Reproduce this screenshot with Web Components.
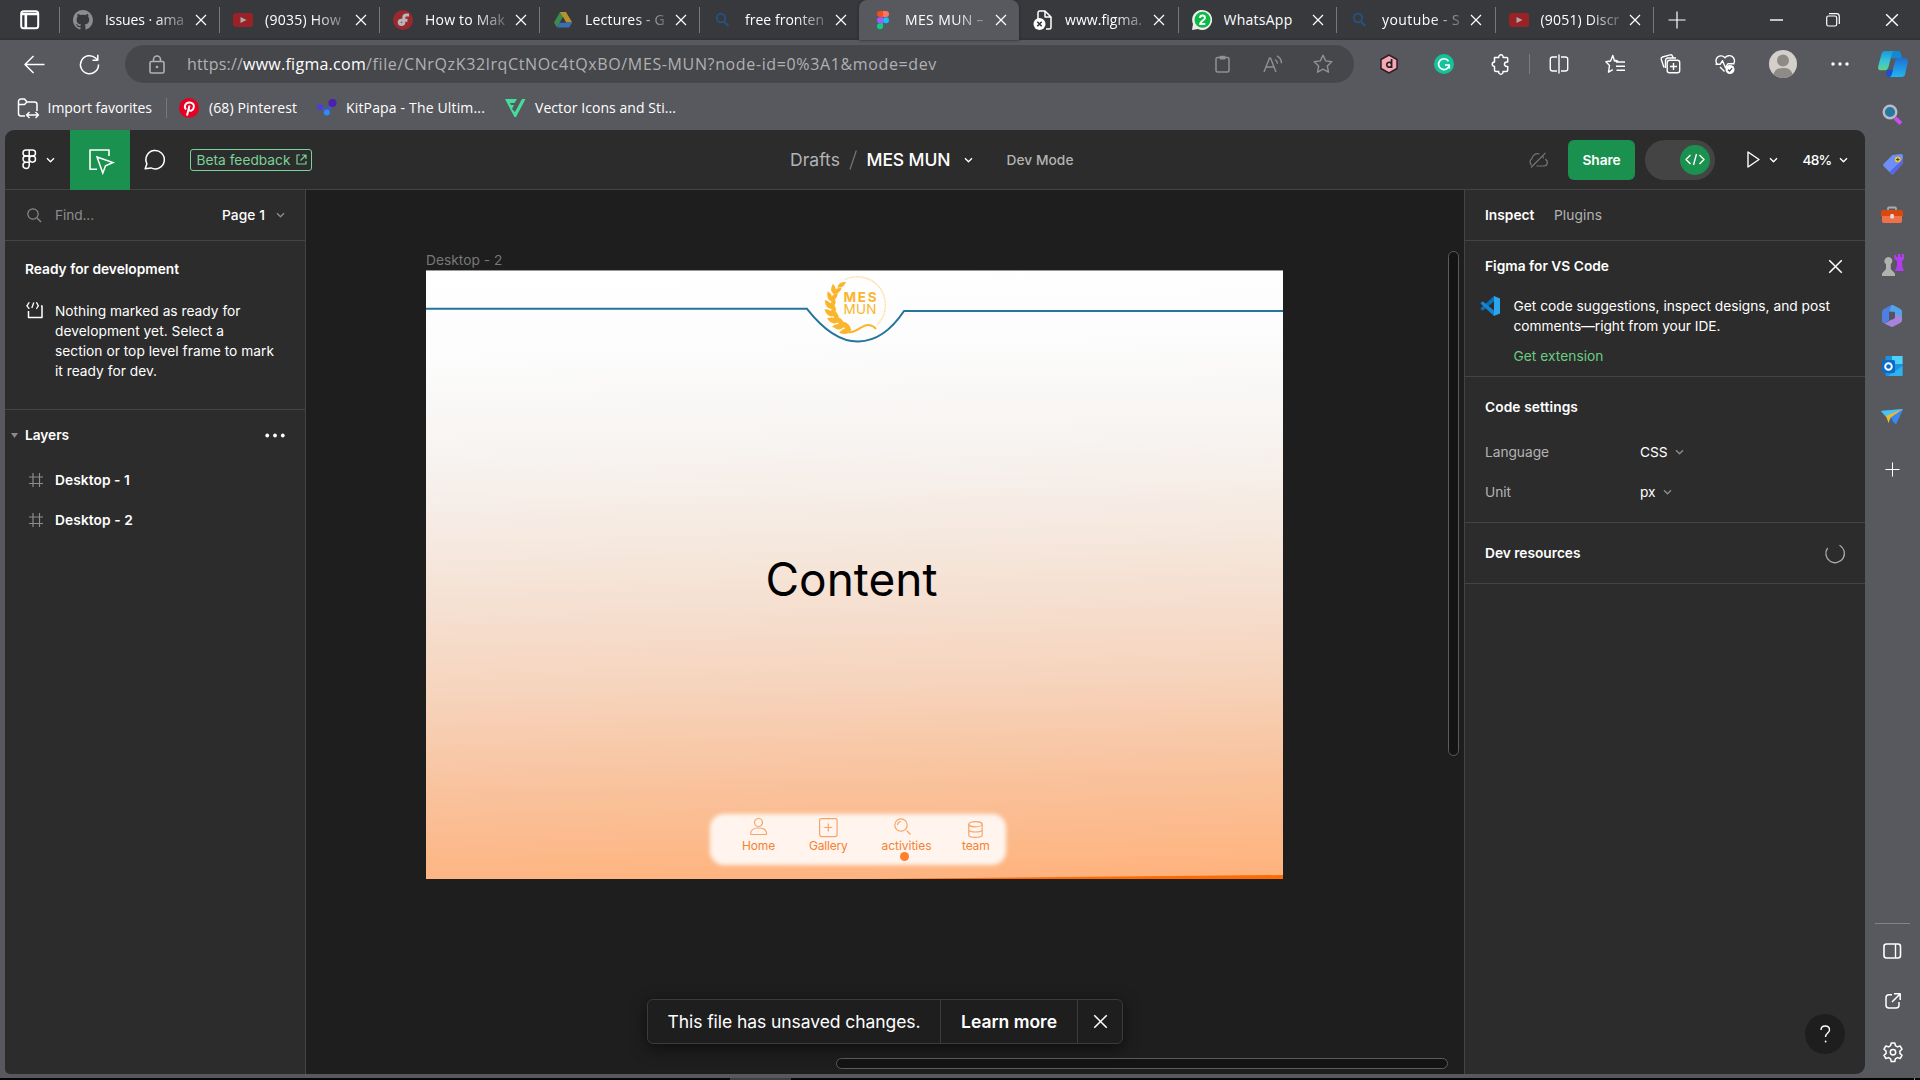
<!DOCTYPE html>
<html lang="en">
<head>
<meta charset="utf-8">
<title>MES MUN – Figma</title>
<style>
html,body{margin:0;padding:0;background:#58595e;overflow:hidden}
body{width:1920px;height:1080px}
</style>
</head>
<body>
<browser-window></browser-window>
<script>
const ICONS = {
 tabs:`<rect x="1.2" y="1.2" width="17" height="17" rx="2.5" stroke-width="2"/><path d="M1 4h18M5.8 4v14" stroke-width="2.6"/>`,
 close:`<path d="M1 1l10 10M11 1L1 11"/>`,
 github:`<path fill="#8b8d90" stroke="none" d="M10 0a10 10 0 0 0-3.2 19.5c.5.1.7-.2.7-.5v-1.900c-2.800.6-3.400-1.200-3.400-1.200-.4-1.100-1.100-1.400-1.100-1.400-.9-.6.1-.6.1-.6 1 .1 1.500 1 1.500 1 .9 1.500 2.400 1.100 2.900.8.1-.6.4-1.100.6-1.300-2.200-.3-4.500-1.100-4.500-5 0-1.100.4-2 1-2.700-.1-.2-.4-1.200.1-2.600 0 0 .8-.3 2.700 1a9.400 9.400 0 0 1 5 0c1.900-1.300 2.700-1 2.700-1 .5 1.400.2 2.400.1 2.600.6.7 1 1.600 1 2.700 0 3.900-2.300 4.700-4.500 5 .4.3.7.9.7 1.900V19c0 .3.2.6.7.5A10 10 0 0 0 10 0z"/>`,
 youtube:`<rect y="3" width="20" height="14" rx="3" fill="#9a2227" stroke="none"/><path d="M7.500 7l6 3-6 3z" fill="#aaa" stroke="none"/>`,
 jred:`<circle cx="10" cy="10" r="10" fill="#99282f" stroke="none"/><path d="M16 5h-2.500c-2 0-2.700 1-2.700 2.500v4.700c0 1.500-.8 2.300-2.300 2.300s-2.300-.8-2.300-2.200.8-2.100 2.300-2.100h6" stroke="#b7b7b9" stroke-width="3"/>`,
 drive:`<path d="M7 2h6L7.500 11.500 4 17.500 1 12.500z" fill="#3c8a4c" stroke="none"/><path d="M7 2h6l6.200 10.500h-6z" fill="#b8922c" stroke="none"/><path d="M4 17.500l3-5h12.200l-3 5z" fill="#396fb4" stroke="none"/><path d="M10 7.200l-3 5.300h6z" fill="#3a3b3f" stroke="none"/>`,
 bing:`<circle cx="8" cy="8" r="4.200" stroke="#27517d" stroke-width="2"/><path d="M11 11.500l4.500 4.500" stroke="#27517d" stroke-width="2.200"/>`,
 figma:`<g stroke="none"><path d="M7 1h3v6H7a3 3 0 0 1 0-6z" fill="#f24e1e"/><path d="M10 1h3a3 3 0 0 1 0 6h-3z" fill="#ff7262"/><path d="M10 7.200v6H7a3 3 0 0 1 0-6z" fill="#a259ff"/><circle cx="13" cy="10.200" r="3" fill="#1abcfe"/><path d="M7 13.300h3v3a3 3 0 1 1-3-3z" fill="#0acf83"/></g>`,
 filex:`<path d="M5 9V2.500A1.700 1.700 0 0 1 6.700 1H12l6 6v10.500a1.500 1.500 0 0 1-1.500 1.500H13M12 1v6h6" stroke-width="1.500"/><circle cx="6.500" cy="14" r="6" fill="#fff" stroke="none"/><path d="M4.300 11.800l4.400 4.400M8.700 11.800l-4.400 4.400" stroke="#333" stroke-width="1.600"/>`,
 whatsapp:`<path d="M0 20l1-6a10 10 0 1 1 5 5z" fill="#eee" stroke="none"/><circle cx="10.500" cy="9.800" r="8" fill="#0cba45" stroke="none"/><path d="M8 8c0-3.300 5-3.300 5 0 0 2-5 3.800-5 6h5.300" stroke="#fff" stroke-width="1.900"/>`,
 plus:`<path d="M9 .5v17M.5 9h17"/>`,
 min:`<path d="M0 1h13" stroke-width="1.400"/>`,
 restore:`<rect x=".7" y="3" width="10" height="10" rx="1.800"/><path d="M3 .7h7.500a2.800 2.800 0 0 1 2.800 2.800V11"/>`,
 back:`<path d="M9.500 1L1 9.500l8.500 8.500M1 9.500h19.500" stroke-width="1.500"/>`,
 reload:`<path d="M19.500 10.500A9 9 0 1 1 16.500 4l2 1.800M18.800 .8v5.400h-5.300" stroke-width="1.500"/>`,
 lock:`<rect x="1" y="6.500" width="14" height="11.500" rx="1.500" stroke-width="1.600"/><path d="M4.500 6.500V4.500a3.500 3.500 0 0 1 7 0v2" stroke-width="1.600"/><circle cx="8" cy="12" r="1.300" fill="currentColor" stroke="none"/>`,
 clip:`<rect x="1" y="2.500" width="13" height="14.500" rx="1.500" stroke-width="1.500"/><rect x="4.500" y=".8" width="6" height="3.600" rx="1" fill="currentColor" stroke="none"/>`,
 aloud:`<path d="M1 17L6.500 3h1L13 17M3 12h8M12 4.500a5 5 0 0 1 2.500 4.200M14 .8a8.500 8.500 0 0 1 4.500 7.400" stroke-width="1.400"/>`,
 star:`<path d="M10 1.200l2.700 5.700 6.100.8-4.500 4.300 1.200 6.200L10 15.200l-5.500 3 1.200-6.200L1.200 7.700l6.100-.8z" stroke-width="1.400"/>`,
 daily:`<path d="M9 1l8 4.500v9L9 19l-8-4.500v-9z" fill="#f9a7b5" stroke="#2b2224" stroke-width="1.500"/><path d="M11.600 5v9M11.600 11.500a2.500 2.500 0 1 1 0-1.500" stroke="#222" stroke-width="1.700"/>`,
 gram:`<circle cx="10" cy="10" r="10" fill="#15c39a" stroke="none"/><path d="M14.500 7.200A5.400 5.400 0 1 0 15.300 11H11M15.300 11v3.500" stroke="#fff" stroke-width="1.700"/>`,
 puzzle:`<path d="M4.500 3.500h4.300a2.200 2.200 0 1 1 4.300 0h3.600a1 1 0 0 1 1 1V8h-1a2.200 2.200 0 0 0 0 4.500h1V16a1.500 1.500 0 0 1-1.500 1.500H13a2.200 2.200 0 1 1-4.300 0H6A1.500 1.500 0 0 1 4.500 16v-3.500a2.200 2.200 0 1 1 0-4.500z" stroke-width="1.500"/>`,
 split:`<path d="M8 3H3.500A2.200 2.200 0 0 0 1.300 5v10a2.200 2.200 0 0 0 2.200 2H8M12 3h4.500a2.200 2.200 0 0 1 2.200 2v10a2.200 2.200 0 0 1-2.200 2H12M10 .5v19" stroke-width="1.400"/>`,
 favs:`<path d="M13.200 7L9.500 7 7.800 1.500 5.600 7 .9 7.700l3.600 3.800-1 6.700 4.300-2.500M12 6.800l-2.800-.6M11 8h9M11 12.200h9M11.500 16.300H20" stroke-width="1.400"/>`,
 collect:`<path d="M4 13.500L1.200 5.300A2 2 0 0 1 2.500 3L10 .9a2 2 0 0 1 2.500 1.300l.5 1.600M5.500 14V6.500a2.500 2.500 0 0 1 2.500-2.500h8" stroke-width="1.400"/><rect x="7.200" y="6.200" width="12.500" height="12.500" rx="2.200" stroke-width="1.400"/><path d="M13.500 9v7M10 12.500h7" stroke-width="1.400"/>`,
 heart:`<path d="M2 10A5 5 0 0 1 10 3.800 5 5 0 0 1 18.500 10M9.500 17.500L5 13M.5 10.200h4.800l2.200-3.500 3 7 2.500-4h6.500" stroke-width="1.400"/><circle cx="15" cy="15.500" r="4.500" fill="#fff" stroke="none"/><path d="M13 15.800l1.500 1.300 2.600-3" stroke="#444" stroke-width="1.300"/>`,
 profile:`<circle cx="14" cy="14" r="14" fill="#d3d0cc" stroke="none"/><circle cx="14" cy="10.500" r="6" fill="#8e8a86" stroke="none"/><path d="M4.500 24.200C6 19 9 18 14 18s8 1 9.500 6.200A14 14 0 0 1 4.500 24.200z" fill="#8e8a86" stroke="none"/>`,
 dots:`<g fill="currentColor" stroke="none"><circle cx="2" cy="2" r="1.700"/><circle cx="9" cy="2" r="1.700"/><circle cx="16" cy="2" r="1.700"/></g>`,
 copilot:`<defs><linearGradient id="a" x1="0" y1="0" x2="0" y2="1"><stop offset="0" stop-color="#159bd7"/><stop offset=".5" stop-color="#35c2dc"/><stop offset="1" stop-color="#5ed58f"/></linearGradient><linearGradient id="b" x1="0" y1="0" x2="0" y2="1"><stop offset="0" stop-color="#1f6fd4"/><stop offset="1" stop-color="#22b5f2"/></linearGradient></defs><g stroke="none"><path d="M7 0h13c2 0 2.800 1 3.200 3L24 7h-5l-5 .500z" fill="#1488d0"/><path d="M18 7h9c2.500 0 3.200 1.700 2.800 4l-2.600 12c-.5 2-1.600 3-3.700 3H10c2.500 0 3.300-2 3.800-4z" fill="url(#b)"/><path d="M9 19h6l-1.500 5c-.4 1.500-1.500 2-3 2-1 0-2-1-2.500-3z" fill="#1a4fd6"/><path d="M7 0h10c-2 0-2.800 1.500-3.200 3L10.500 16c-.5 2-1.500 3.200-3.500 3.200H2.500C.5 19.200-.3 17.500.2 15.500L3.500 3C4 1 5 0 7 0z" fill="url(#a)"/></g>`,
 impfav:`<path d="M8 19H4a2.500 2.500 0 0 1-2.500-2.500v-12A2.500 2.500 0 0 1 4 2h3.500l2.500 3h7.500A2.500 2.500 0 0 1 20 7.500V14M1.500 7.500h6L10 5" stroke-width="1.500"/><path d="M10 18h11M12.500 15l-3 3 3 3M18.500 15l3 3-3 3" stroke-width="1.400"/>`,
 pin:`<circle cx="10" cy="10" r="10" fill="#e60023" stroke="none"/><path d="M7 11.500C4.500 8.500 6.500 4.500 10.300 4.500c3.500 0 5 2.300 4.500 4.800-.6 3.400-4 4.300-5 2.300M10.500 7.500L8 17.500" stroke="#fff" stroke-width="2"/>`,
 kit:`<path d="M3 8.500l7 5 6-8.500" stroke="#3b55dd" stroke-width="2.500"/><g stroke="none"><circle cx="3" cy="9" r="3" fill="#4a3fd6"/><circle cx="15.500" cy="5" r="4" fill="#4b1fb0"/><circle cx="9.800" cy="14.500" r="3" fill="#2b8df5"/></g>`,
 vec:`<path d="M0 1h12L9.500 5H5l1 2h3L7 11l3 3L17 1h3.500L11 19H9.500z" fill="#45dd9c" stroke="none"/>`,
 flogo:`<rect x="1" y="1" width="12.500" height="6" rx="3" stroke-width="1.500"/><path d="M7.200 1v15.500a3.100 3.100 0 1 1-3.100-3.300h3.100M7.200 7H4.100a3.100 3.100 0 0 0 0 6.200" stroke-width="1.500"/><circle cx="10.400" cy="10.100" r="3.100" stroke-width="1.500"/>`,
 chev:`<path d="M1 1.200l3.500 3.500L8 1.200" stroke-width="1.400"/>`,
 inspect:`<path d="M8 20.200H1V1h19v6" stroke-width="1.600"/><path d="M8 8l16 5.500-7.500 3.200L13.800 24z" stroke-width="1.500" stroke-linejoin="miter"/>`,
 comment:`<path d="M1.200 18.800l1.700-5A9.200 9.200 0 1 1 7 17.900l-5.800.9z" stroke-width="1.500"/>`,
 ext:`<path d="M4 1H1v9h9V7M6 1h4v4M10 1L4.500 6.500" stroke-width="1.200"/>`,
 slash:`<path d="M7.300.5L1 19.500" stroke-width="1.200"/>`,
 cloud:`<path d="M11.500 2A5.500 5.500 0 0 0 4 6.500 4 4 0 0 0 3.500 13M8.500 14H16a3.500 3.500 0 0 0 1.200-6.700M15.300 6.300A6 6 0 0 0 15 4.500M17.500.8L3 15.500" stroke-width="1.200"/>`,
 code:`<path d="M5.500 1L1 5.500 5.500 10M14.500 1L19 5.500 14.500 10M11.500 0l-3 11" stroke-width="1.400"/>`,
 play:`<path d="M1 1l11 7.500L1 16z" stroke-width="1.400"/>`,
 search:`<circle cx="6" cy="6" r="5.200"/><path d="M10 10l4 4"/>`,
 ready:`<path d="M2.500 9v6.500H16V4h-1" stroke-width="1.500"/><path d="M3.500.7C1.500 1 2.500 3 .8 3.800 2.500 4.500 1.500 6.300 3.500 6.500M7.800.5l-2 5.500M10 .7c2 .3 1 2.300 2.500 3.100-1.500.7-.5 2.500-2.500 2.700" stroke-width="1.300"/>`,
 tri:`<path d="M0 0h7L3.500 5z" fill="#8a8a8a" stroke="none"/>`,
 hash:`<path d="M4 0v14M10.500 0v14M0 4h14M0 10.500h14" stroke-width="1.200"/>`,
 vscode:`<path d="M14 0v5.500L3 14.500.8 13.600v-1.500z" fill="#0a6fb5" stroke="none"/><path d="M14 20v-5.500L3 5.400l-2.200 1v1.400z" fill="#1684d0" stroke="none"/><path d="M14 0l6 2.500v15L14 20z" fill="#2aa5ee" stroke="none"/>`,
 spinner:`<path d="M14.500 2.200A9.300 9.300 0 1 1 2.600 5" stroke-width="1.300"/>`,
 ssearch:`<path d="M13 14l6 5.500" stroke="#c84ef0" stroke-width="4"/><circle cx="8" cy="8" r="6.300" fill="#2876a4" stroke="#b9bcc2" stroke-width="2.400"/>`,
 tag:`<path d="M10.500 1L19 0q2 0 2 2l-.500 7.500L11.500 20q-1 1-2 0l-8-8q-1-1 0-2z" fill="#6f8ff8" stroke="none"/><path d="M21 5l-.500 4.500L11.500 20q-1 1-2 0l-2-2z" fill="#5865e8" stroke="none"/><circle cx="15.800" cy="5.500" r="3" fill="#f2c62c" stroke="none"/><path d="M15.800 3.800v3.400M14.100 5.500h3.400" stroke="#444" stroke-width="1"/>`,
 tools:`<path d="M7 5V2.500q0-1 1-1h6q1 0 1 1V5" stroke="#a9abae" stroke-width="1.800"/><path d="M0 6q0-2 2-2h18q2 0 2 2v4H0z" fill="#d8480f" stroke="none"/><path d="M1 10h20v5q0 2-2 2H3q-2 0-2-2z" fill="#ef7049" stroke="none"/><rect x="9.300" y="8" width="3.600" height="4.500" rx="1" fill="#dcdcdc" stroke="none"/>`,
 chess:`<path d="M13 1h2v2h2V0h2.500v3h1.500V0H23v5l-2 2 .5 6L23 17h-9l2-5V7l-2.500-2z" fill="#b43cf0" stroke="none"/><path d="M7.500 3a4 4 0 0 1 2.300 7.200V15l4.200 4.500V22H1v-2.500L5 15v-4.800A4 4 0 0 1 7.500 3z" fill="#b1b1b0" stroke="none"/>`,
 m365:`<path d="M10.500 0L14.500 1.500 8 7v8l-4.500 3.500L1 17V7q0-2 2-3z" fill="#4f7fe0" stroke="none"/><path d="M10.500 0q1-.3 2 .2L19.500 4q1.500 1 1.500 2.500V14l-7-4V7L8.500 6.500z" fill="#52a4ea" stroke="none"/><path d="M21 12v3.500q0 1.500-1.500 2.300L12.500 21.500q-1.500.8-3 0L3.500 18.500 8 16l6-3.500V9z" fill="#a883dc" stroke="none"/><path d="M14 8.500l-3-1.800-3 1.800v4.500l3 1.700 3-1.700z" fill="#505269" stroke="none"/>`,
 outlook:`<rect x="3.500" y="0" width="17" height="20" rx="1" fill="#1b93e0" stroke="none"/><path d="M10 0h10.500v8H10z" fill="#4fd2f8" stroke="none"/><path d="M20.500 10v10H6z" fill="#2fb3ee" stroke="none"/><rect x="0" y="4" width="13" height="13" rx="1.500" fill="#0a6cc8" stroke="none"/><circle cx="6.500" cy="10.500" r="3.300" stroke="#fff" stroke-width="1.900"/>`,
 plane:`<path d="M0 2L22 0 15 15z" fill="#3f9ff2" stroke="none"/><path d="M0 2L22 0 5 8z" fill="#48c3f5" stroke="none"/><path d="M5 7L22 0 7.500 14z" fill="#f6b81c" stroke="none"/><path d="M9 9L22 0 15 15z" fill="#3a86f5" stroke="none"/><path d="M7.500 14l2-5 2.500 2z" fill="#2360b5" stroke="none"/>`,
 panel:`<rect x="1" y="1" width="16.500" height="14" rx="2.500" stroke-width="1.600"/><path d="M12.500 1v14" stroke-width="1.400"/>`,
 sext:`<path d="M7 1.800H4A3 3 0 0 0 1 4.800V12a3 3 0 0 0 3 3h7a3 3 0 0 0 3-3V9M9 .8h6.200V7M15 1L7 9" stroke-width="1.500"/>`,
 gear:`<path d="M8.200 1h3.600l.6 2.700 2 1.200 2.700-.9 1.900 3.200-2.100 1.900v2.300l2.100 1.900-1.900 3.200-2.700-.9-2 1.200-.6 2.700H8.200l-.6-2.700-2-1.200-2.700.9L1 13.300l2.100-1.900V9.100L1 7.200 2.900 4l2.700.9 2-1.200z" stroke-width="1.500"/><circle cx="10" cy="10.200" r="2.700" stroke-width="1.500"/>`,
 help:`<path d="M1 5C1 2.500 2.800 1 5.200 1s4.300 1.400 4.300 3.900c0 3-4 3.300-4 7" stroke-width="1.400"/><circle cx="5.600" cy="16.500" r=".9" fill="currentColor" stroke="none"/>`,
 home:`<circle cx="8.500" cy="4.500" r="4"/><path d="M.6 16c0-4 3-6 8-6s8 2 8 6q0 .5-.7.500H1.300Q.6 16.500.6 16z"/>`,
 gallery:`<rect x=".6" y=".6" width="17.500" height="18" rx="2"/><path d="M9.300 5.500v8M5.300 9.500h8"/>`,
 act:`<circle cx="7" cy="7" r="6.200"/><path d="M3.500 7A3.500 3.500 0 0 1 7 3.500M12.500 12.500l4 4"/>`,
 team:`<ellipse cx="7.500" cy="3.200" rx="6.700" ry="2.600"/><path d="M.8 3.200v10.500c0 3.500 13.400 3.500 13.400 0V3.200M.8 8.500c0 3.300 13.400 3.300 13.400 0"/>`
};
const RESET = `*{box-sizing:border-box}:host{box-sizing:border-box;display:flex}`;
function component(name, css, html) {
  customElements.define(name, class extends HTMLElement {
    constructor() {
      super();
      this.attachShadow({mode: 'open'}).innerHTML = `<style>${RESET}${css}</style>` + (typeof html === 'function' ? html(this) : html);
    }
  });
}
const icon = (n, w, h, extra = '') => `<ui-icon name="${n}" w="${w}" h="${h}" ${extra}></ui-icon>`;
const fit = (t, w, extra = '') => `<fit-text w="${w}" ${extra}>${t}</fit-text>`;

component('browser-window', `
:host{width:1920px;height:1080px;flex-direction:column;background:#58595e;color:#fff;font:14px/20px "Open Sans","Noto Sans",sans-serif;overflow:hidden}
.main{display:flex;height:944px}
.fav{height:45px}
.foot{height:2px;margin-top:4px;background:#060606;display:flex}
.foot i{margin-left:730px;width:61px;background:#3f3f40}
.foot b{margin-left:1123px;width:1px;background:#888}`,
`<tab-strip></tab-strip><address-row></address-row><favorites-row class="fav"></favorites-row>
<div class="main"><figma-app></figma-app><edge-sidebar></edge-sidebar></div><div class="foot"><i></i><b></b></div>`);

component('tab-strip', `
:host{height:40px;background:linear-gradient(#38393d 37px,#303135);align-items:center}
.tabs{width:59px;display:flex;padding-left:20px}
.add{margin-left:14px}.mn{margin-left:84px}.rs{margin-left:43px}.cl{margin-left:45px}`,
`<div class="tabs">${icon('tabs',20,20)}</div>
<browser-tab label="Issues · ama" icon="github" tw="79"></browser-tab>
<browser-tab label="(9035) How" icon="youtube" tw="76"></browser-tab>
<browser-tab label="How to Mak" icon="jred" tw="80"></browser-tab>
<browser-tab label="Lectures - G" icon="drive" tw="80"></browser-tab>
<browser-tab label="free fronten" icon="bing" tw="79"></browser-tab>
<browser-tab label="MES MUN –" icon="figma" tw="79" active></browser-tab>
<browser-tab label="www.figma." icon="filex" tw="77" nosep narrow></browser-tab>
<browser-tab label="WhatsApp" icon="whatsapp" tw="69" nofade narrow></browser-tab>
<browser-tab label="youtube - S" icon="bing" tw="78" narrow></browser-tab>
<browser-tab label="(9051) Discr" icon="youtube" tw="79" narrow end></browser-tab>
${icon('plus',18,18,'class="add"')}${icon('min',13,2,'class="mn"')}${icon('restore',14,14,'class="rs"')}${icon('close',14,14,'class="cl"')}`);

component('browser-tab', `
:host{width:160px;flex:none;height:40px;align-items:center;border-left:1px solid transparent;border-image:linear-gradient(transparent 8px,#77787b 8px,#77787b 32px,transparent 32px) 1}
:host([narrow]){width:158.500px}
:host([end]){border-right-width:1px;border-right-style:solid;width:159.500px}
:host([active]){background:#58595e;border-image:none;border:0;border-radius:8px 8px 0 0;box-shadow:0 0 3px #222326}
:host([nosep]){border-image:none}
ui-icon.f{margin-left:13px}
:host([active]) ui-icon.f{margin-left:14px}
.t{margin-left:12px;width:80px;overflow:hidden;-webkit-mask-image:linear-gradient(90deg,#000 62%,rgba(0,0,0,.25) 100%)}
:host([nofade]) .t{-webkit-mask-image:none}
:host([narrow]) .t{width:78.500px}
.x{margin-left:9.500px}`,
h=>`${icon(h.getAttribute('icon'),20,20,'class="f"')}<div class="t">${fit(h.getAttribute('label'),h.getAttribute('tw'))}</div>${icon('close',12,12,'class="x"')}`);

component('address-row', `
:host{height:45px;align-items:flex-start;padding-top:5px}
.c{display:flex;height:38px;align-items:center;justify-content:center;flex:none}
.bar{display:flex;width:1229px;flex:none;height:38px;border-radius:19px;background:#46474b;align-items:center;padding-left:24px;font-size:16px;color:#b0b1b3}
.bar b{font-weight:400;color:#fff}
.url{display:flex;flex:none;margin-left:22px;width:1001px}
.g{color:#909193}
.sep{width:1px;height:20px;background:#7b7c80;margin-top:9px}`,
`<div class="c" style="width:69px">${icon('back',21,19)}</div><div class="c" style="width:41px">${icon('reload',21,20)}</div><div style="width:15px"></div>
<div class="bar">${icon('lock',16,19)}<div class="url">${fit('https://',56)}<b>${fit('www.figma.com',123)}</b>${fit('/file/CNrQzK32lrqCtNOc4tQxBO/MES-MUN?node-id=0%3A1&amp;mode=dev',571)}</div>
<div class="c g" style="width:50px;margin-left:9.500px">${icon('clip',15,18)}</div><div class="c g" style="width:50px">${icon('aloud',19,18)}</div><div class="c g" style="width:50px">${icon('star',20,20)}</div></div>
<div class="c" style="width:70px">${icon('daily',18,20)}</div><div class="c" style="width:40px">${icon('gram',20,20)}</div><div class="c" style="width:71px">${icon('puzzle',20,20)}</div>
<div class="sep" style="margin-left:-6px"></div><div class="c" style="width:58px">${icon('split',20,20)}</div><div class="c" style="width:54px">${icon('favs',21,20)}</div><div class="c" style="width:56px">${icon('collect',21,20)}</div><div class="c" style="width:54px">${icon('heart',21,20)}</div><div class="c" style="width:62px">${icon('profile',28,28)}</div><div class="c" style="width:52px">${icon('dots',18,4)}</div><div class="c" style="width:54px">${icon('copilot',30,27)}</div>`);

component('favorites-row', `:host{align-items:center;padding-left:17px}i{width:1px;height:20px;background:#77787c;margin:0 12px 0 14px}ui-icon{margin-right:10px}`,
`${icon('impfav',22,22,'style="margin-right:8.500px"')}${fit('Import favorites',104.5)}<i></i>${icon('pin',20,20)}${fit('(68) Pinterest',88)}${icon('kit',19,20,'style="margin-left:20px"')}${fit('KitPapa - The Ultim...',139)}${icon('vec',21,20,'style="margin-left:20px;margin-right:9px"')}${fit('Vector Icons and Sti...',141)}`);

component('edge-sidebar', `
:host{width:55px;flex-direction:column;align-items:center;margin-top:-45px;height:989px}
div{display:flex;width:55px;height:50.250px;align-items:center;justify-content:center;flex:none;padding-right:1px}
i{width:35px;height:1px;flex:none;background:#828388;margin-top:425.750px;margin-bottom:2px}`,
`<div style="margin-top:4px;margin-bottom:.500px">${icon('ssearch',20,20)}</div><div>${icon('tag',21,21)}</div><div>${icon('tools',22,18)}</div><div>${icon('chess',23,22)}</div><div>${icon('m365',22,22)}</div><div>${icon('outlook',21,20)}</div><div>${icon('plane',22,15)}</div><div style="height:56px">${icon('plus',15,15)}</div>
<i></i><div style="padding:0">${icon('panel',19,16)}</div><div style="padding:0">${icon('sext',16,16)}</div><div style="padding:0">${icon('gear',20,20)}</div>`);

component('figma-app', `
:host{margin-left:5px;width:1860px;height:944px;flex-direction:column;background:#2c2c2c;border-radius:9px 9px 9px 5px;overflow:hidden;font:13.750px/20px Inter,"Liberation Sans",sans-serif;font-optical-sizing:none;color:#fff}
.body{display:flex;height:884px}`,
`<figma-header></figma-header><div class="body"><layers-panel></layers-panel><design-canvas></design-canvas><inspect-panel></inspect-panel></div>`);

component('figma-header', `
:host{height:60px;align-items:center;border-bottom:1px solid #444}
.c{display:flex;height:60px;align-items:center;justify-content:center;flex:none}
.green{width:60px;background:#1b9150;margin-bottom:-1px}
.beta{display:flex;width:122px;height:22px;margin-left:10px;border:1px solid #79d297;border-radius:3px;color:#79d297;align-items:center;padding-left:5.500px;gap:5px}
.title{display:flex;align-items:center;margin-left:478px;font-size:17.500px}
.share{display:flex;width:67px;height:40px;margin-left:20px;border-radius:6px;background:#1b9150;align-items:center;justify-content:center;font-weight:600}
.toggle{display:flex;width:70px;height:40px;margin-left:10px;border-radius:20px;background:#444;align-items:center;justify-content:flex-end;padding-right:5px}
.knob{display:flex;width:30px;height:30px;border-radius:15px;background:#1b9150;align-items:center;justify-content:center}`,
`<div class="c" style="width:65px;padding-left:1px">${icon('flogo',15,21)}${icon('chev',9,6,'style="margin-left:9px"')}</div>
<div class="c green">${icon('inspect',25,25,'style="margin:3px 0 0 3px"')}</div><div class="c" style="width:50px">${icon('comment',22,20)}</div>
<div class="beta">${fit('Beta feedback',94)}${icon('ext',11,11)}</div>
<div class="title">${fit('Drafts',50,'style="color:#b3b3b3"')}${icon('slash',8,20,'style="color:#777;margin:0 9.500px 0 9px"')}${fit('MES MUN',84,'style="font-weight:500"')}${icon('chev',9,6,'style="margin-left:13px"')}</div>
${fit('Dev Mode',67,'style="margin-left:34px;color:#b3b3b3;font-weight:500"')}
${icon('cloud',20,16,'style="margin-left:auto;color:#777"')}<div class="share">${fit('Share',38)}</div><div class="toggle"><div class="knob">${icon('code',20,11)}</div></div>
${icon('play',13,17,'style="margin-left:32px"')}${icon('chev',9,6,'style="margin:0 24.500px 0 9px"')}${fit('48%',29,'style="font-weight:500"')}${icon('chev',9,6,'style="margin:0 17.500px 0 7px"')}`);

component('layers-panel', `
:host{width:301px;flex:none;flex-direction:column;border-right:1px solid #444}
.r{display:flex;align-items:center}
.find{height:51px;border-bottom:1px solid #444;padding-left:22px}
.ready{height:169px;border-bottom:1px solid #444;padding:18px 0 0 20px}
.b{font-weight:600}.p{display:flex;margin-top:22px}.p>div{margin-left:12px}
.g{color:#8c8c8c}`,
`<div class="r find">${icon('search',15,15,'class="g"')}${fit('Find...',39,'class="g" style="margin-left:13px"')}${fit('Page 1',43,'style="font-weight:500;margin-left:128px"')}${icon('chev',9,6,'class="g" style="margin-left:11px"')}</div>
<div class="ready">${fit('Ready for development',154,'class="b"')}<div class="p">${icon('ready',18,17,'style="margin:1px -1px 0 1px"')}<div>${fit('Nothing marked as ready for',185.5)}${fit('development yet. Select a',169)}${fit('section or top level frame to mark',219)}${fit('it ready for dev.',102)}</div></div></div>
<div class="r" style="height:50px;padding-left:6px">${icon('tri',7,5)}${fit('Layers',44,'class="b" style="margin-left:7px"')}${icon('dots',20,5,'style="margin-left:196px"')}</div>
<layer-row label="Desktop - 1" tw="75"></layer-row><layer-row label="Desktop - 2" tw="78"></layer-row>`);

component('layer-row', `:host{height:40px;align-items:center;padding-left:24px;font-weight:600}ui-icon{color:#8c8c8c;margin-right:12px}`,
h=>icon('hash',14,14)+fit(h.getAttribute('label'),h.getAttribute('tw')));

component('design-canvas', `
:host{position:relative;width:1158px;flex:none;background:#1e1e1e;overflow:hidden}
.label{position:absolute;left:120px;top:60px;color:#777}
artboard-frame{position:absolute;left:120px;top:80px}
.sv,.sh{position:absolute;border:1.500px solid #5c5c5c;background:#141414;border-radius:6px}
.sv{left:1142px;top:61px;width:11px;height:505px}.sh{left:530px;top:868px;width:612px;height:11px}
toast-bar{position:absolute;left:341px;top:809px}`,
`${fit('Desktop - 2',76.5,'class="label"')}<artboard-frame></artboard-frame><div class="sv"></div><div class="sh"></div><toast-bar></toast-bar>`);

/* Pairs of leaves along the left side of the emblem, each pointing up the stem. */
function wreath() {
  let out = '';
  for (let i = 0; i < 8; i++) {
    const a = 105 + i * 17, r = a * Math.PI / 180;
    const x = 857 + 26 * Math.cos(r), y = 305 + 25.5 * Math.sin(r), k = 1.15 - i * 0.03;
    for (const d of i === 7 ? [10] : [-32, 28])
      out += `<path transform="translate(${x.toFixed(1)} ${y.toFixed(1)}) rotate(${a + 90 + d}) scale(${k.toFixed(2)})" d="M-1 0Q3-5 10 0Q5 4.500-1 0z"/>`;
  }
  return out;
}
component('artboard-frame', `
:host{width:856.500px;height:609px;overflow:hidden;color:#000;border-top:1px solid #999;
background:linear-gradient(178.500deg,#fff 0%,#fcfcfc 14%,#f7f3f0 30%,#f5e6db 47%,#f6d5bf 66%,#f9c29c 83%,#ffb27c 100%)}
svg{position:absolute;left:0;top:-1px}
.content{position:absolute;left:339.500px;top:278px;font-size:46px;line-height:60px}
.nav{position:absolute;left:284px;top:543px;width:296px;height:51px}
.nav:before{content:"";position:absolute;inset:0;border-radius:14px;background:#fff5ee;filter:blur(2px)}
nav-item{position:absolute}
.dot{position:absolute;left:190px;top:38px;width:9px;height:9px;border-radius:5px;background:#ff7f2a}`,
`<svg width="857" height="609" viewBox="426 270 857 609" fill="none">
<path d="M820 879.500L1283 875V879.500z" fill="#ff6b00"/>
<path d="M426 308.800H807Q833 342 858.500 341.500T904 311H1283" stroke="#24749b" stroke-width="2"/>
<path d="M845 279.500A28.200 28.200 0 0 1 877 325" stroke="#fddf9e" stroke-width="1.500" stroke-dasharray="1.600 .7"/>
<g fill="#fbb52c">${wreath()}</g>
<path d="M845 331.500C857 335 861 324 869 325q5 1 7 4" stroke="#fbb52c" stroke-width="2"/>
<g fill="#fbb52c" font-family="Inter,sans-serif" font-size="13.500"><text x="843.500" y="301.500" textLength="33" font-weight="700">MES</text><text x="843.500" y="314" textLength="33">MUN</text></g>
</svg>
${fit('Content',172,'class="content"')}
<div class="nav"><nav-item style="left:32px;top:4px" label="Home" tw="33" icon="home" iw="17" ih="17"></nav-item><nav-item style="left:99px;top:4px" label="Gallery" tw="38.500" icon="gallery" iw="19" ih="19"></nav-item><nav-item style="left:171.500px;top:4px" label="activities" tw="50" icon="act" iw="17" ih="17" shift="-13"></nav-item><nav-item style="left:252px;top:4px" label="team" tw="27.500" icon="team" iw="15" ih="17" down="3"></nav-item><div class="dot"></div></div>`);

component('nav-item', `:host{flex-direction:column;align-items:center;color:#f58233;font-size:12px}.i{height:17.500px;display:flex}fit-text{height:20px}ui-icon{color:#f7a469}`,
h=>`<div class="i" style="padding-right:${-(h.getAttribute('shift')||0)/1.5}px;padding-top:${h.getAttribute('down')||0}px">${icon(h.getAttribute('icon'),h.getAttribute('iw'),h.getAttribute('ih'))}</div>${fit(h.getAttribute('label'),h.getAttribute('tw'))}`);

component('toast-bar', `
:host{width:476px;height:45px;border:1px solid #3b3b3b;border-radius:6px;background:#1e1e1e;box-shadow:0 4px 16px rgba(0,0,0,.55);font-size:17.500px}
div{display:flex;align-items:center;justify-content:center;border-right:1px solid #3b3b3b}div:last-child{border:0}`,
`<div style="width:293px">${fit('This file has unsaved changes.',253)}</div><div style="width:137px;font-weight:600">${fit('Learn more',96)}</div><div style="flex:1;padding-left:1px">${icon('close',15,15)}</div>`);

component('inspect-panel', `
:host{width:401px;flex:none;flex-direction:column;border-left:1px solid #444;position:relative}
section{display:flex;border-bottom:1px solid #444;padding-left:20px;flex:none}
.col{flex-direction:column}.b{font-weight:600}.g{color:#b3b3b3}.r{display:flex;align-items:center}
ui-icon[name=chev]{color:#8c8c8c;margin-left:7px}
.help{position:absolute;right:20px;bottom:20px;width:40px;height:40px;border-radius:20px;background:#1e1e1e;display:flex;align-items:center;justify-content:center}`,
`<section style="height:51px;align-items:center">${fit('Inspect',49.5,'class="b"')}${fit('Plugins',48,'class="g" style="margin-left:19.5px"')}</section>
<section class="col" style="height:136px;padding-top:15px"><div class="r">${fit('Figma for VS Code',124,'class="b"')}${icon('close',15,15,'style="margin-left:219px"')}</div>
<div style="display:flex;margin:20px 0 0 -5px">${icon('vscode',20,20)}<div style="margin-left:13.500px">${fit('Get code suggestions, inspect designs, and post',316.5)}${fit('comments—right from your IDE.',207)}${fit('Get extension',90,'style="margin-top:10px;color:#6bcb83"')}</div></div></section>
<section class="col" style="height:146px;padding-top:20px">${fit('Code settings',93,'class="b"')}<div class="r" style="margin-top:15px;height:40px;margin-bottom:0">${fit('Language',64,'class="g"')}${fit('CSS',27.5,'style="margin-left:91px"')}${icon('chev',9,6)}</div><div class="r" style="height:40px">${fit('Unit',26,'class="g"')}${fit('px',15.5,'style="margin-left:129px"')}${icon('chev',9,6)}</div></section>
<section style="height:61px;align-items:center">${fit('Dev resources',95.5,'class="b"')}${icon('spinner',21,21,'style="margin-left:244px;color:#aaa"')}</section>
<div class="help">${icon('help',11,19)}</div>`);

customElements.define('ui-icon', class extends HTMLElement {
  connectedCallback() {
    if (this.shadowRoot) return;
    const n = this.getAttribute('name'), w = this.getAttribute('w'), h = this.getAttribute('h');
    const box = n === 'close' ? '0 0 12 12' : n === 'plus' ? '0 0 18 18' : n === 'dots' ? '0 0 18 4' : `0 0 ${w} ${h}`;
    this.attachShadow({mode: 'open'}).innerHTML = `<style>:host{display:block;flex:none;width:${w}px;height:${h}px}svg{display:block;overflow:visible}</style>
<svg width="${w}" height="${h}" viewBox="${box}" fill="none" stroke="currentColor" stroke-width="1.2" stroke-linejoin="round">${ICONS[n]}</svg>`;
  }
});
/* Single line of text whose tracking is adjusted so that it fills the width given in "w". */
customElements.define('fit-text', class extends HTMLElement {
  connectedCallback() {
    if (this.shadowRoot) return;
    const w = parseFloat(this.getAttribute('w'));
    this.attachShadow({mode: 'open'}).innerHTML = `<style>:host{display:block;flex:none;width:${w}px;white-space:nowrap}span{display:inline-block}</style><span><slot></slot></span>`;
    const s = this.shadowRoot.querySelector('span');
    const d = (w - s.getBoundingClientRect().width) / this.textContent.length;
    s.style.letterSpacing = d.toFixed(3) + 'px';
  }
});
</script>
</body>
</html>
